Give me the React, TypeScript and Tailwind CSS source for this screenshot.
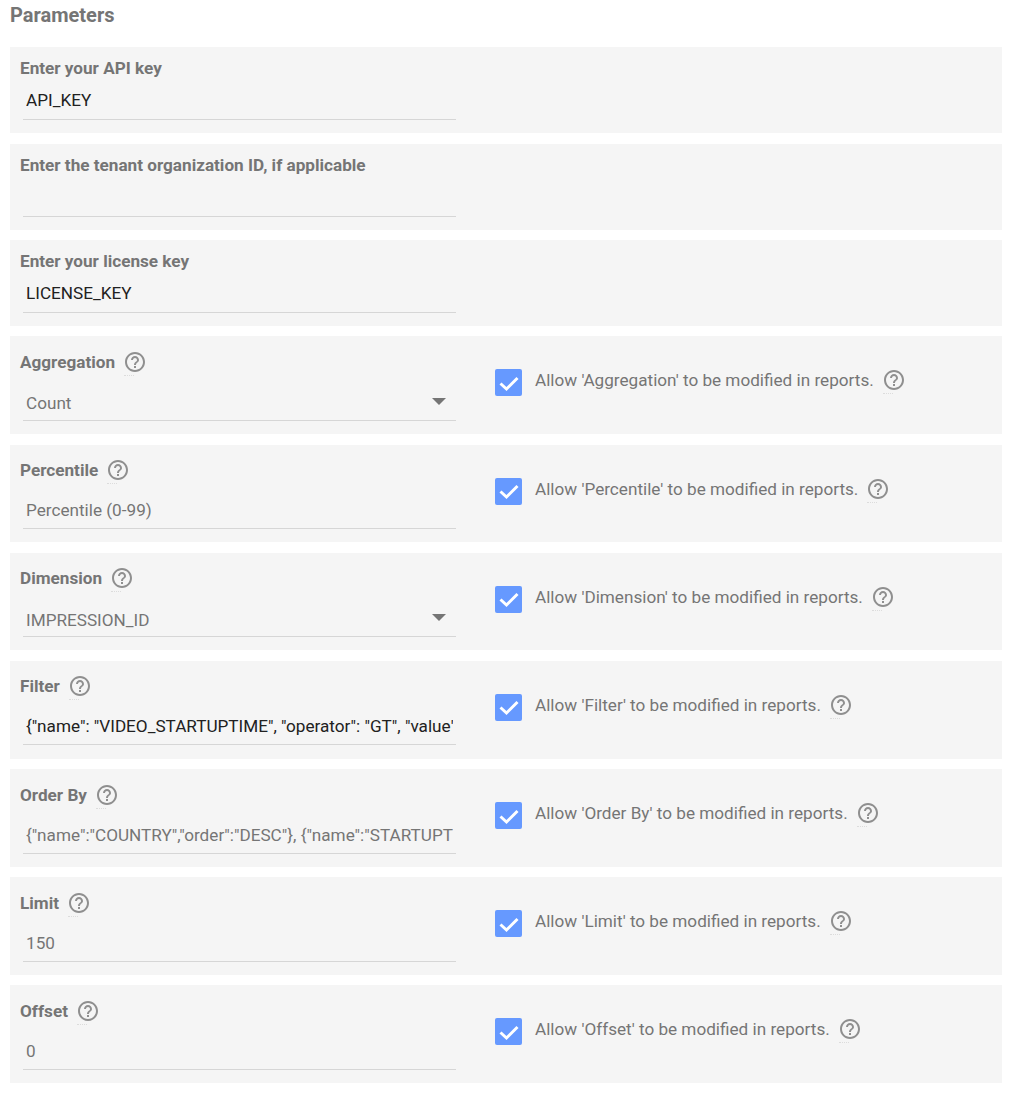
import { MdHelpOutline } from "react-icons/md";

type Param = {
  label: string;
  value: string;
  dark?: boolean;
  select?: boolean;
};

const plainParams: Param[] = [
  { label: "Enter your API key", value: "API_KEY", dark: true },
  { label: "Enter the tenant organization ID, if applicable", value: "" },
  { label: "Enter your license key", value: "LICENSE_KEY", dark: true },
];

const reportParams: Param[] = [
  { label: "Aggregation", value: "Count", select: true },
  { label: "Percentile", value: "Percentile (0-99)" },
  { label: "Dimension", value: "IMPRESSION_ID", select: true },
  {
    label: "Filter",
    value: '{"name": "VIDEO_STARTUPTIME", "operator": "GT", "value": 5000}',
    dark: true,
  },
  {
    label: "Order By",
    value: '{"name":"COUNTRY","order":"DESC"}, {"name":"STARTUPTIME","order":"ASC"}',
  },
  { label: "Limit", value: "150" },
  { label: "Offset", value: "0" },
];

function HelpIcon() {
  return (
    <span className="relative ml-[8px] block h-[24px] w-[24px] shrink-0">
      <MdHelpOutline className="text-[24px] text-[#8f8f8f]" />
      <span className="absolute bottom-[-2px] left-[1px] w-[10px] border-b border-dotted border-[#dcdcdc]" />
    </span>
  );
}

function Field({ param, tall }: { param: Param; tall?: boolean }) {
  return (
    <div className="relative ml-[3px] w-[433px] border-b border-[#d6d6d6]">
      <input
        readOnly
        value={param.value}
        className={`w-full bg-transparent px-[3px] text-[17.15px] leading-6 outline-none ${
          tall ? "h-[33px]" : "h-[35px]"
        } ${param.select ? "pb-0" : "pb-[3px]"} ${param.dark ? "text-[#212121]" : "text-[#757575]"}`}
      />
      {param.select && (
        <div className="absolute right-[10px] top-[11px] h-0 w-0 border-x-[7px] border-t-[7px] border-x-transparent border-t-[#757575]" />
      )}
    </div>
  );
}

function PlainRow({ param }: { param: Param }) {
  return (
    <div className="h-[85.8px] bg-[#f5f5f5] pl-[10px] pt-[11px]">
      <div className="mb-[6px] h-[20px] text-[17.15px] font-bold leading-5 text-[#757575]">{param.label}</div>
      <Field param={param} />
    </div>
  );
}

function ReportRow({ param }: { param: Param }) {
  return (
    <div className="flex h-[97.7px] bg-[#f5f5f5] pl-[10px]">
      <div className="w-[446px] pt-[13.6px]">
        <div className="mb-[12.9px] flex h-[24px] items-center text-[17.15px] font-bold leading-5 text-[#757575]">
          {param.label}
          <HelpIcon />
        </div>
        <Field param={param} tall />
      </div>
      <div className="ml-[29px] flex h-[88px] items-center">
        <div className="mt-[5px] flex h-[27px] w-[27px] items-center justify-center rounded-[2px] bg-[#6699ff]">
          <svg viewBox="0 0 24 24" className="h-[24px] w-[24px]" fill="none" stroke="white" strokeWidth="3">
            <path d="M3.5 12.5 9.5 18 20.5 7" />
          </svg>
        </div>
        <span className="ml-[13px] text-[17.15px] leading-6 text-[#757575]">
          Allow '{param.label}' to be modified in reports.
        </span>
        <HelpIcon />
      </div>
    </div>
  );
}

export default function App() {
  return (
    <div className="min-h-[1096px] bg-white px-[10px] font-['Roboto',sans-serif]">
      <h2 className="h-[47.45px] pt-[3px] text-[20px] font-bold leading-[24px] text-[#757575]">Parameters</h2>
      <div className="flex flex-col gap-[10.5px]">
        {plainParams.map((p) => (
          <PlainRow key={p.label} param={p} />
        ))}
        {reportParams.map((p) => (
          <ReportRow key={p.label} param={p} />
        ))}
      </div>
    </div>
  );
}
